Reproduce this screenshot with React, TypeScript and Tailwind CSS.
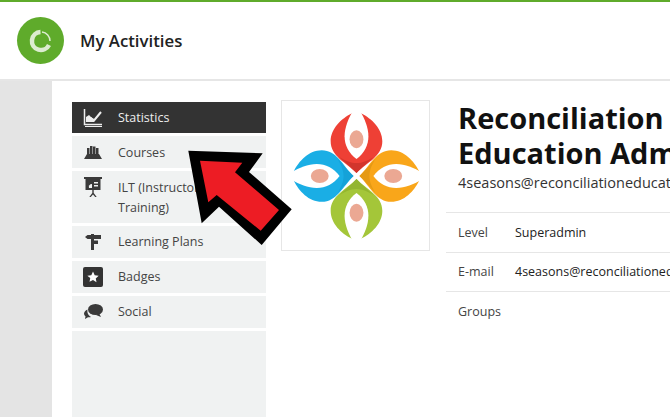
import React from 'react';

const StatsIcon = () => (
  <svg width="20" height="20" viewBox="0 0 20 20" fill="none" stroke="#eeeeee">
    <path d="M1.500 1v15.500H19" strokeWidth="1.500" />
    <path d="M2 18.500h17" strokeWidth="1" />
    <path d="M3 14V9l3-2 3 3 2 1v3z" fill="#eeeeee" stroke="none" />
    <path d="M5 11l3-1 3 2.500L18 4" strokeWidth="2" stroke="#eeeeee" />
  </svg>
);

const CoursesIcon = () => (
  <svg width="18" height="13" viewBox="0 0 18 13" fill="#3a3a3a">
    <rect x="3" y="2" width="2.500" height="8" />
    <rect x="6" y="0" width="2.500" height="10" />
    <rect x="9" y="0.500" width="2.500" height="10" />
    <rect x="12" y="2" width="2.500" height="8" />
    <path d="M3 8h12l3 5H0z" />
  </svg>
);

const IltIcon = () => (
  <svg width="20" height="21" viewBox="0 0 20 21" fill="#3a3a3a">
    <rect x="1" y="0" width="18" height="2" />
    <rect x="2.500" y="2" width="15" height="11" />
    <path d="M6 11a3 3 0 0 1 3-4v4z" fill="#eff1f1" />
    <rect x="11" y="5" width="4" height="1.500" fill="#eff1f1" />
    <rect x="11" y="8" width="4" height="1.500" fill="#eff1f1" />
    <path d="M9.300 13h1.400v3l3 4h-1.500L10 17.500 7.800 20H6.300l3-4z" />
  </svg>
);

const PlansIcon = () => (
  <svg width="16" height="16" viewBox="0 0 16 16" fill="#3a3a3a">
    <path d="M0 3L2.500 1H6V0h3v1h7v4H9v1.500h4v3.500H9V16H6V5H2.500z" />
  </svg>
);

const BadgeIcon = () => (
  <div className="flex h-5 w-5 items-center justify-center rounded-[2px] bg-[#333333]">
    <svg width="12" height="12" viewBox="0 0 24 24" fill="#ffffff">
      <path d="M12 1l3.400 7.300 7.900 1-5.800 5.500 1.500 7.900L12 18l-7 3.700 1.500-7.900L.7 9.300l7.900-1z" />
    </svg>
  </div>
);

const SocialIcon = () => (
  <svg width="19" height="15" viewBox="0 0 19 15" fill="#3a3a3a">
    <ellipse cx="11.500" cy="5.500" rx="7.500" ry="5.500" />
    <path d="M15 9l2 4-5-2z" />
    <path d="M3.500 5.500C1.500 6.500 0 8 0 9.500c0 1.200.6 2 1.500 2.700L1 15l3-1.800c1 .2 2 .2 3-.2 0 0-2-1-3-3s-.5-4.500-.5-4.500z" />
  </svg>
);

const Logo = () => (
  <svg width="148" height="148" viewBox="0 0 148 148">
    {[
      { angle: 0, color: '#ee4035', dark: '#d2352c' },
      { angle: 90, color: '#f9a61a', dark: '#e59a14' },
      { angle: 180, color: '#a4c639', dark: '#93b52f' },
      { angle: 270, color: '#1aaee5', dark: '#15a2d8' },
    ].map((p) => (
      <g key={p.angle} transform={`rotate(${p.angle} 75 74)`}>
        <path d="M75 71C64 60 49 54 49 39 49 26 60 16 70 11L80 11C90 16 101 26 101 39 101 54 86 60 75 71z" fill={p.color} />
        <path d="M75 71C70 65 63 60 58 55 63 58 69 61 75 61 81 61 87 58 92 55 87 60 80 65 75 71z" fill={p.dark} />
        <path d="M75 57C67 51 63 43 63 34 63 25 67 16 71 9H79C83 16 87 25 87 34 87 43 83 51 75 57z" fill="#ffffff" />
        <ellipse cx="75" cy="37" rx="7" ry="9" fill="#eba893" />
      </g>
    ))}
  </svg>
);

const ArrowOverlay = () => (
  <svg className="absolute left-[180px] top-[140px]" width="120" height="110" viewBox="180 140 120 110">
    <path d="M188.300 150.700L262.700 153.300 249 172 291.700 209.300 261.700 245 219 206.700 201.700 223.300z" fill="#000000" />
    <path d="M200 160.700L242.300 162.700 235 172.300 279 210 260.700 230.700 216.700 195 208.300 202.300z" fill="#ed1c24" />
  </svg>
);

const items = [
  { label: 'Courses', icon: <CoursesIcon />, h: 'h-[32px] items-center' },
  { label: 'ILT (Instructor-Led Training)', icon: <IltIcon />, h: 'h-[52px] items-start pt-[6px]' },
  { label: 'Learning Plans', icon: <PlansIcon />, h: 'h-[32px] items-center pb-[1px]' },
  { label: 'Badges', icon: <BadgeIcon />, h: 'h-[32px] items-center pb-[1px]' },
  { label: 'Social', icon: <SocialIcon />, h: 'h-[32px] items-center pb-[1px]' },
];

const rows = [
  { label: 'Level', value: 'Superadmin' },
  { label: 'E-mail', value: '4seasons@reconciliationeducation.ca' },
  { label: 'Groups', value: '' },
];

export default function App() {
  return (
    <div className="relative h-[417px] w-[670px] overflow-hidden bg-white font-['Open_Sans',sans-serif]">
      <div className="h-[2px] bg-[#5fab2b]" />
      <div className="flex h-[77px] items-center gap-[16px] pl-[17px]">
        <div className="flex h-[47px] w-[47px] items-center justify-center rounded-full bg-[#5fab2b]">
          <svg width="26" height="26" viewBox="0 0 26 26" fill="none" stroke="#dcecd0">
            <path d="M12.500 4A9 9 0 1 0 21 17" strokeWidth="4.500" />
            <path d="M14 4A9 9 0 0 1 22 13" strokeWidth="1.500" />
          </svg>
        </div>
        <span className="pt-[1px] text-[16.800px] font-semibold text-[#222222]">My Activities</span>
      </div>
      <div className="h-[2px] bg-[#e6e6e6]" />
      <div className="flex h-[336px]">
        <div className="w-[52px] shrink-0 bg-[#e4e4e4]" />
        <div className="flex min-w-0 flex-1 pl-[20px] pt-[21px]">
          <nav className="flex w-[194px] shrink-0 flex-col gap-[3px]">
            <div className="flex h-[31px] items-center bg-[#333333]">
              <div className="flex w-[46px] justify-center pr-[4px]"><StatsIcon /></div>
              <span className="pt-[1px] text-[12.500px] text-[#eeeeee]">Statistics</span>
            </div>
            {items.map((item) => (
              <div key={item.label} className={`flex ${item.h} bg-[#f0f2f2]`}>
                <div className="flex w-[46px] shrink-0 justify-center pr-[4px]">{item.icon}</div>
                <span className="w-[120px] pt-[1px] text-[12.500px] leading-[20px] text-[#444444]">{item.label}</span>
              </div>
            ))}
            <div className="flex-1 bg-[#f0f2f2]" />
          </nav>
          <div className="ml-[15px] mt-[-2px] flex h-[151px] w-[149px] shrink-0 items-center justify-center border border-[#e6e6e6]">
            <Logo />
          </div>
          <div className="min-w-0 flex-1 pl-[16px]">
            <div className="pl-[12px]">
              <h1 className="mt-[-2px] w-[300px] text-[29px] font-bold leading-[35px] text-[#111111]">Reconciliation Education Admin</h1>
              <p className="mt-[1px] whitespace-nowrap text-[14.500px] leading-[24px] text-[#333333]">4seasons@reconciliationeducation.ca</p>
            </div>
            <div className="mt-[17px] border-b border-[#e6e6e6]" />
            {rows.map((row) => (
              <div key={row.label} className="flex h-[39.500px] items-center border-b border-[#e6e6e6] pl-[12px] pt-[2px] text-[12.500px] last:border-b-0">
                <span className="w-[57px] shrink-0 text-[#444444]">{row.label}</span>
                <span className="whitespace-nowrap text-[#222222]">{row.value}</span>
              </div>
            ))}
          </div>
        </div>
      </div>
      <ArrowOverlay />
    </div>
  );
}
